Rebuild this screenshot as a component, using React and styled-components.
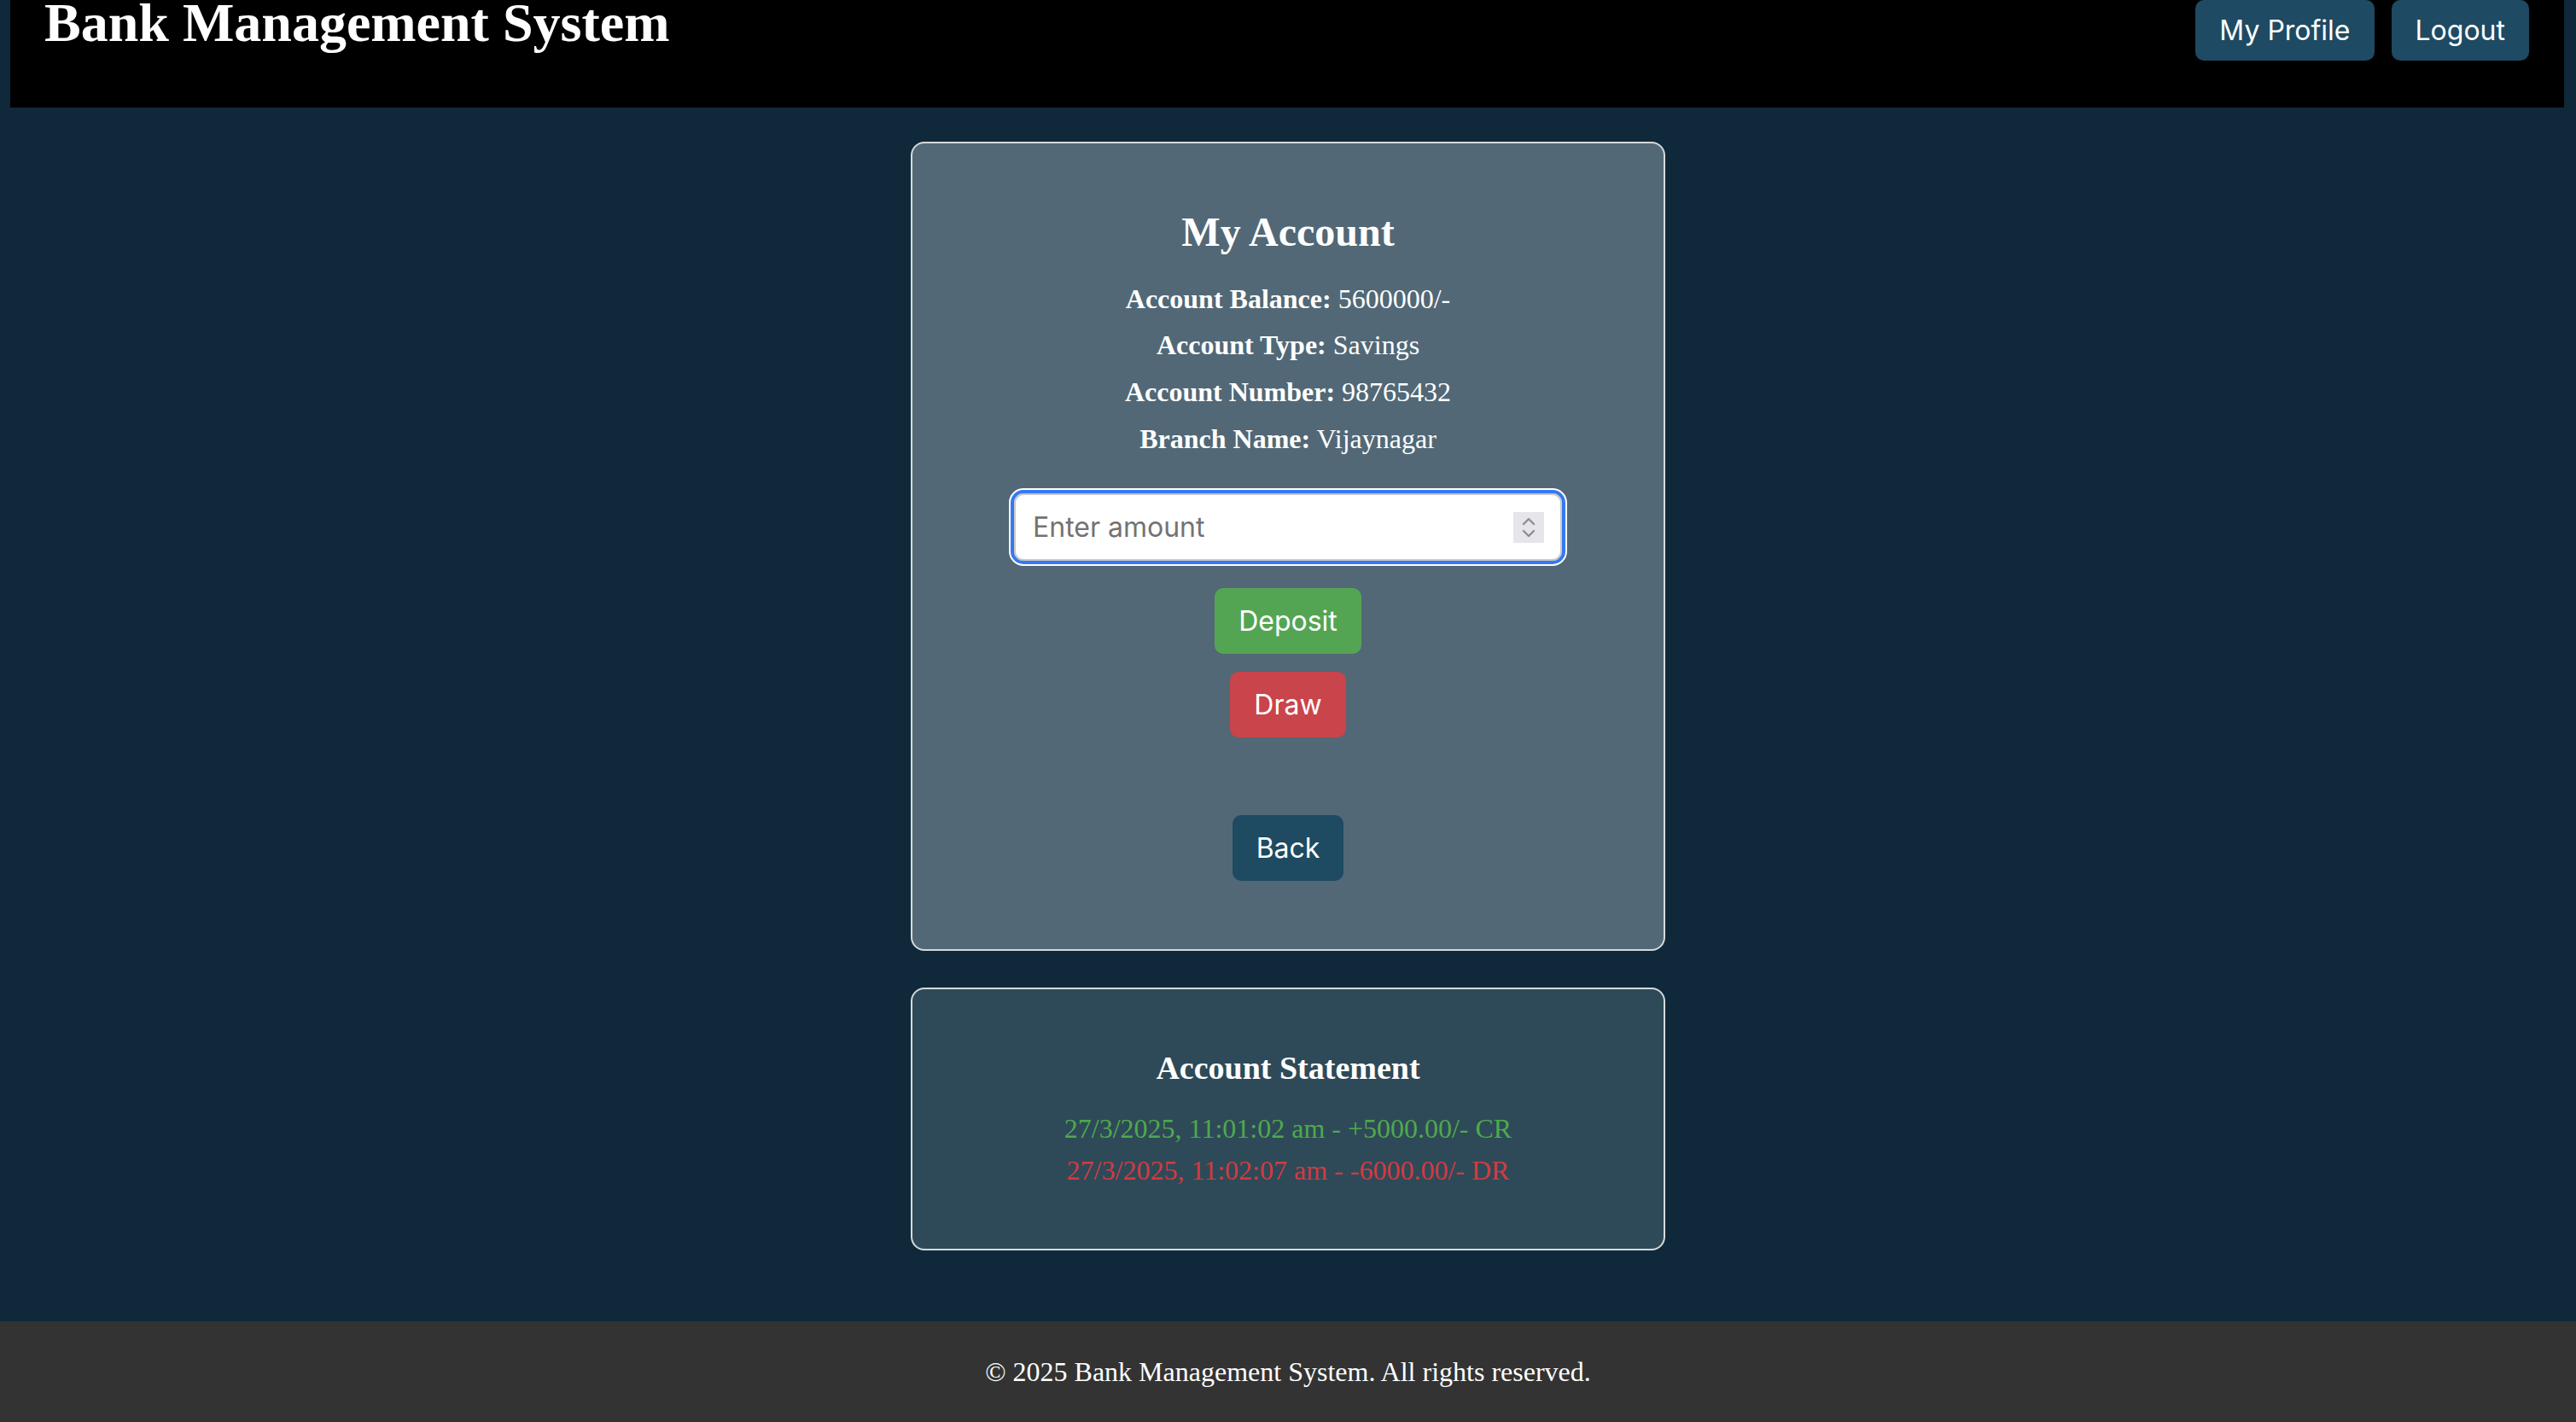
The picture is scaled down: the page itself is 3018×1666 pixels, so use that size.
import React from 'react';
import styled, {createGlobalStyle} from 'styled-components';

const GlobalStyle = createGlobalStyle`
  html, body {
    margin: 0;
    padding: 0;
    background: #0f293b;
  }
  body {
    font-family: "Liberation Serif", "Times New Roman", serif;
    color: #ffffff;
  }
`;

const Page = styled.div`
  min-height: 100vh;
  display: flex;
  flex-direction: column;
`;

const Header = styled.header`
  margin: 0 14px 0 12px;
  height: 126px;
  background: #000000;
  display: flex;
  justify-content: space-between;
  align-items: flex-start;
  padding: 0 41px 0 40px;
  box-sizing: border-box;

  h1 {
    margin: -10px 0 0;
    font-size: 64px;
    font-weight: bold;
    line-height: normal;
  }
`;

const Nav = styled.nav`
  display: flex;
  gap: 20px;
`;

const Button = styled.button`
  font-family: Inter, "Noto Sans", sans-serif;
  font-size: 32px;
  color: #ffffff;
  border: none;
  border-radius: 10px;
  background: ${p => p.$bg || '#1e4a63'};
  height: ${p => p.$h || 77}px;
  padding: 0 ${p => p.$px || 28}px;
  margin: ${p => p.$m || '0'};
  cursor: pointer;
`;

const Main = styled.main`
  flex: 1;
  display: flex;
  flex-direction: column;
  align-items: center;
  gap: 43px;
  padding: 40px 0 83px;
`;

const Card = styled.section`
  width: 884px;
  box-sizing: border-box;
  border: 2px solid #d6d9db;
  border-radius: 16px;
  background: ${p => p.$bg};
  display: flex;
  flex-direction: column;
  align-items: center;
  text-align: center;
  padding: ${p => p.$pad};
`;

const Title = styled.h2`
  margin: 0;
  font-size: ${p => p.$size}px;
  line-height: ${p => Math.round(p.$size * 1.15)}px;
  font-weight: bold;
`;

const Info = styled.p`
  margin: ${p => p.$mt || 17.7}px 0 0;
  font-size: 32px;
  line-height: 37px;

  strong {
    font-weight: bold;
  }
`;

const AmountField = styled.div`
  position: relative;
  width: 642px;
  height: 79px;
  margin: 45.5px 0 0;
  border-radius: 11px;
  box-shadow: 0 0 0 4px #3479f2, 0 0 0 6px #ffffff;
`;

const AmountInput = styled.input`
  width: 100%;
  height: 100%;
  box-sizing: border-box;
  border: 2px solid #c9c9c9;
  border-radius: 11px;
  background: #ffffff;
  padding: 0 20px;
  font-family: Inter, "Noto Sans", sans-serif;
  font-size: 32px;
  color: #222;
  outline: none;

  &::placeholder {
    color: #737373;
  }
`;

const Spinner = styled.span`
  position: absolute;
  right: 21px;
  top: 22px;
  width: 36px;
  height: 36px;
  background: #e5e5ea;
  display: flex;
  align-items: center;
  justify-content: center;
`;

const Statement = styled.p`
  margin: ${p => p.$mt}px 0 0;
  font-size: 32px;
  line-height: 37px;
  color: ${p => p.$color};
`;

const Footer = styled.footer`
  background: #333333;
  text-align: center;
  padding: 40.5px 0;
  font-size: 32px;
  line-height: 37px;
`;

const App = () => {
   return (
      <Page>
         <GlobalStyle/>
         <Header>
            <h1>Bank Management System</h1>
            <Nav>
               <Button $h={71}>My Profile</Button>
               <Button $h={71}>Logout</Button>
            </Nav>
         </Header>

         <Main>
            <Card $bg="#526876" $pad="76px 0 80px">
               <Title $size={48}>My Account</Title>
               <Info $mt={32.5}><strong>Account Balance:</strong> 5600000/-</Info>
               <Info><strong>Account Type:</strong> Savings</Info>
               <Info><strong>Account Number:</strong> 98765432</Info>
               <Info><strong>Branch Name:</strong> Vijaynagar</Info>

               <AmountField>
                  <AmountInput type="text" placeholder="Enter amount"/>
                  <Spinner>
                     <svg width="18" height="26" viewBox="0 0 18 26" fill="none" stroke="#8e8e93" strokeWidth="2.4" strokeLinecap="round" strokeLinejoin="round">
                        <path d="M3 9 L9 3 L15 9"/>
                        <path d="M3 17 L9 23 L15 17"/>
                     </svg>
                  </Spinner>
               </AmountField>

               <Button $bg="#54a553" $m="32px 0 0">Deposit</Button>
               <Button $bg="#c9444b" $m="21px 0 0">Draw</Button>
               <Button $bg="#1e4a62" $m="91px 0 0">Back</Button>
            </Card>

            <Card $bg="#2e4a58" $pad="70px 0 73.5px">
               <Title $size={38}>Account Statement</Title>
               <Statement $mt={30.5} $color="#4fa94d">27/3/2025, 11:01:02 am - +5000.00/- CR</Statement>
               <Statement $mt={12} $color="#d13b42">27/3/2025, 11:02:07 am - -6000.00/- DR</Statement>
            </Card>
         </Main>

         <Footer>© 2025 Bank Management System. All rights reserved.</Footer>
      </Page>
   );
};

export default App;
